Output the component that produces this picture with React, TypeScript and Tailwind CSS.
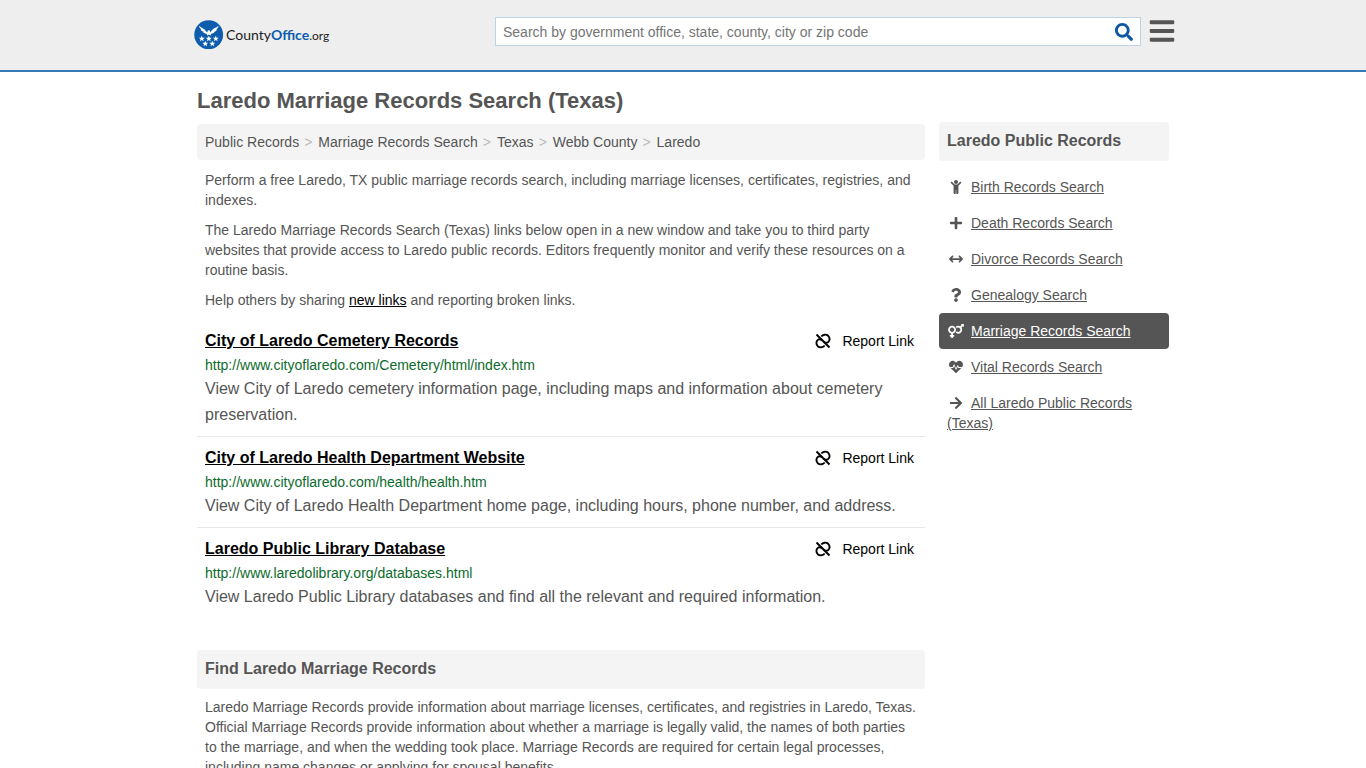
import React from "react";
import {
  FaArrowRight,
  FaBars,
  FaChild,
  FaHeartbeat,
  FaPlus,
  FaQuestion,
  FaSearch,
  FaVenusMars,
} from "react-icons/fa";
import { FaArrowsLeftRight } from "react-icons/fa6";
import type { IconType } from "react-icons";

interface RecordLink {
  title: string;
  url: string;
  description: string;
}

interface SidebarLink {
  label: string;
  icon: IconType;
  active?: boolean;
}

const breadcrumbs = ["Public Records", "Marriage Records Search", "Texas", "Webb County", "Laredo"];

const records: RecordLink[] = [
  {
    title: "City of Laredo Cemetery Records",
    url: "http://www.cityoflaredo.com/Cemetery/html/index.htm",
    description:
      "View City of Laredo cemetery information page, including maps and information about cemetery preservation.",
  },
  {
    title: "City of Laredo Health Department Website",
    url: "http://www.cityoflaredo.com/health/health.htm",
    description:
      "View City of Laredo Health Department home page, including hours, phone number, and address.",
  },
  {
    title: "Laredo Public Library Database",
    url: "http://www.laredolibrary.org/databases.html",
    description: "View Laredo Public Library databases and find all the relevant and required information.",
  },
];

const sidebarLinks: SidebarLink[] = [
  { label: "Birth Records Search", icon: FaChild },
  { label: "Death Records Search", icon: FaPlus },
  { label: "Divorce Records Search", icon: FaArrowsLeftRight },
  { label: "Genealogy Search", icon: FaQuestion },
  { label: "Marriage Records Search", icon: FaVenusMars, active: true },
  { label: "Vital Records Search", icon: FaHeartbeat },
  { label: "All Laredo Public Records (Texas)", icon: FaArrowRight },
];

const starPath = "M0-3 .85-1.050 2.900-.9 1.300.45 1.800 2.500 0 1.400-1.800 2.500-1.300.45-2.900-.9-.85-1.050Z";

const stars = [
  [7.8, 18.7],
  [14.8, 18.7],
  [21.8, 18.7],
  [11.3, 23.7],
  [18.3, 23.7],
];

const Logo = () => (
  <a href="#" className="flex items-center gap-0.5" aria-label="CountyOffice.org">
    <svg viewBox="0 0 30 30" className="h-[30px] w-[30px]" aria-hidden="true">
      <circle cx="14.700" cy="14.700" r="14.400" fill="#0d5cad" />
      <g fill="#fff">
        <path d="M5 5.800C7 8 10 8.200 12 11.200L13.200 12.500 13.900 10.600 15.500 10.300 16.500 12.300C18.500 8.400 22 8 24.600 5.800 24.300 7.500 23.400 8.600 22.300 9.300L23 9.400C22.200 10.800 21.200 11.500 20 11.900L20.600 12.100C19.600 13.200 18.500 13.700 17.300 13.800L16.600 15.600 14.900 14.800 13.200 15.600 12.500 13.800C11.200 13.700 10 13.200 9 12.100L9.700 11.900C8.400 11.500 7.300 10.700 6.700 9.400L7.400 9.300C6.200 8.600 5.300 7.500 5 5.800Z" />
        {stars.map(([x, y]) => (
          <path key={`${x}-${y}`} d={starPath} transform={`translate(${x} ${y})`} />
        ))}
      </g>
    </svg>
    <span className="font-['Lato',sans-serif] text-[14px] leading-5 text-[#222]">
      County<b className="text-[#0d5cad]">Office</b>
      <span className="text-[12px]">.org</span>
    </span>
  </a>
);

const UnlinkIcon = () => (
  <svg
    viewBox="0 0 16 16"
    className="h-4 w-4"
    fill="none"
    stroke="currentColor"
    strokeWidth="1.900"
    aria-hidden="true"
  >
    <path d="M1.500 1.500 14.500 14.500" />
    <path d="M6.300 3.500C8 1.400 11.200 1 13.200 2.800 15.200 4.800 15 7.700 13 9.200 11.700 10.200 10.300 9.900 8.900 8.700" />
    <path d="M9.700 12.500C8 14.600 4.800 15 2.800 13.200.8 11.200 1 8.300 3 6.800 4.300 5.800 5.700 6.100 7.100 7.300" />
  </svg>
);

const Header = () => (
  <header className="border-b-2 border-[#337ab7] bg-[#eee]">
    <div className="mx-auto flex h-[70px] max-w-[986px] items-start justify-between gap-6 pl-1">
      <div className="pt-5">
        <Logo />
      </div>
      <div className="flex w-[681px] items-start gap-[7px] pt-[17px]">
        <form
          className="flex h-[29px] flex-1 items-center border border-[#bcd3e6] bg-white px-[7px]"
          onSubmit={(e) => e.preventDefault()}
        >
          <input
            type="text"
            aria-label="Search"
            placeholder="Search by government office, state, county, city or zip code"
            className="min-w-0 flex-1 text-[14px] leading-5 outline-none placeholder:text-[#757575]"
          />
          <button type="submit" aria-label="Submit search" className="text-[#0d56a6]">
            <FaSearch size={18} />
          </button>
        </form>
        <button type="button" aria-label="Open menu" className="text-[#555]">
          <FaBars size={28} />
        </button>
      </div>
    </div>
  </header>
);

const SectionTitle = ({ children }: { children: React.ReactNode }) => (
  <h2 className="rounded bg-[#f4f4f4] px-2 pt-[7px] pb-2 text-[16px] leading-6 font-bold">{children}</h2>
);

const RecordItem = ({ record }: { record: RecordLink }) => (
  <li className="border-b border-[#e8e8e8] p-2 last:border-b-0">
    <div className="flex items-center justify-between">
      <h3 className="text-[16px] leading-[26px] font-bold">
        <a href="#" className="text-black underline">
          {record.title}
        </a>
      </h3>
      <button type="button" className="flex items-center gap-[11px] pr-[3px] text-[14px] leading-5 text-black">
        <UnlinkIcon />
        Report Link
      </button>
    </div>
    <p className="my-px text-[14px] leading-5 text-[#0c6b2c]">{record.url}</p>
    <p className="text-[16px] leading-[26px]">{record.description}</p>
  </li>
);

const Sidebar = () => (
  <aside className="w-[230px] shrink-0 pt-[50px]">
    <SectionTitle>Laredo Public Records</SectionTitle>
    <ul className="mt-2">
      {sidebarLinks.map(({ label, icon: Icon, active }) => (
        <li key={label}>
          <a href="#" className={`block rounded p-2 ${active ? "bg-[#555] text-white" : ""}`}>
            <Icon className="mr-[6px] inline-block h-[14px] w-[18px] align-[-2px]" />
            <span className="underline">{label}</span>
          </a>
        </li>
      ))}
    </ul>
  </aside>
);

export default function App() {
  return (
    <div className="min-h-screen bg-white font-['Liberation_Sans',Arial,sans-serif] text-[14px] leading-5 text-[#555]">
      <Header />
      <div className="mx-auto flex max-w-[972px] items-start gap-[14px]">
        <main className="min-w-0 flex-1 pt-4 pb-8">
          <h1 className="mb-[10px] text-[22px] leading-[26px] font-bold">Laredo Marriage Records Search (Texas)</h1>
          <nav aria-label="Breadcrumb" className="rounded bg-[#f4f4f4] p-2">
            <ol className="flex flex-wrap">
              {breadcrumbs.map((crumb, i) => (
                <li key={crumb}>
                  {i > 0 && <span className="pr-[6px] pl-[5px] text-[#bbb]">&gt;</span>}
                  <a href="#">{crumb}</a>
                </li>
              ))}
            </ol>
          </nav>
          <div className="space-y-[10px] px-2 py-[10px]">
            <p>
              Perform a free Laredo, TX public marriage records search, including marriage licenses, certificates,
              registries, and indexes.
            </p>
            <p>
              The Laredo Marriage Records Search (Texas) links below open in a new window and take you to third party
              websites that provide access to Laredo public records. Editors frequently monitor and verify these
              resources on a routine basis.
            </p>
            <p>
              Help others by sharing{" "}
              <a href="#" className="text-black underline">
                new links
              </a>{" "}
              and reporting broken links.
            </p>
          </div>
          <ul>
            {records.map((record) => (
              <RecordItem key={record.url} record={record} />
            ))}
          </ul>
          <section className="mt-8">
            <SectionTitle>Find Laredo Marriage Records</SectionTitle>
            <p className="mt-2 px-2">
              Laredo Marriage Records provide information about marriage licenses, certificates, and registries in
              Laredo, Texas. Official Marriage Records provide information about whether a marriage is legally valid,
              the names of both parties to the marriage, and when the wedding took place. Marriage Records are required
              for certain legal processes, including name changes or applying for spousal benefits.
            </p>
          </section>
        </main>
        <Sidebar />
      </div>
    </div>
  );
}
